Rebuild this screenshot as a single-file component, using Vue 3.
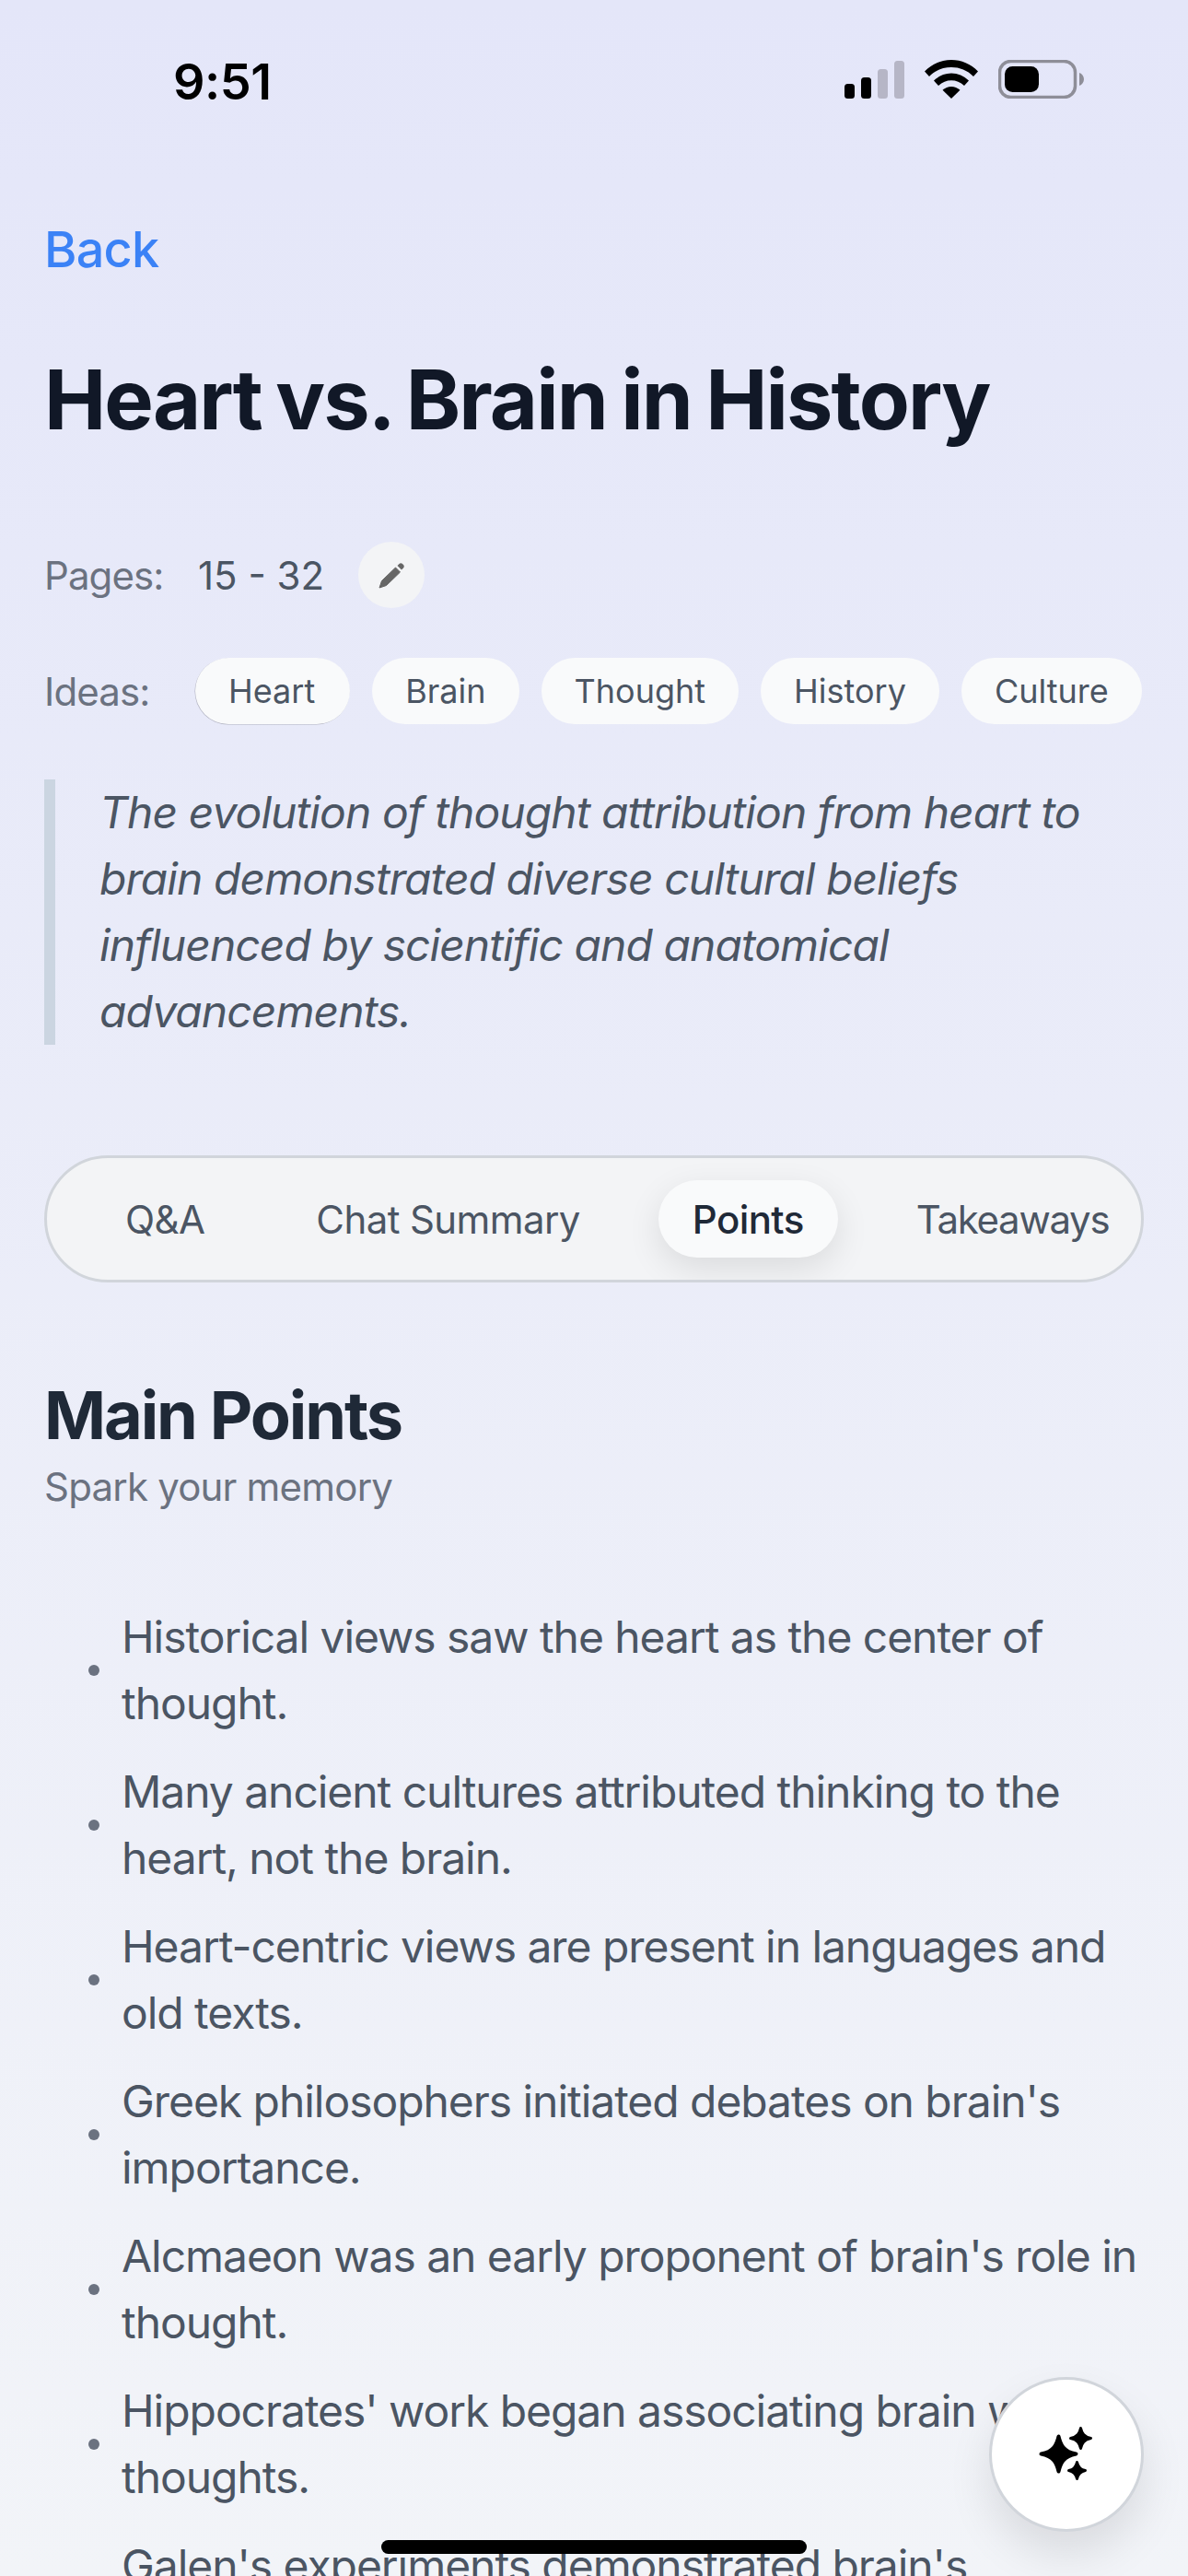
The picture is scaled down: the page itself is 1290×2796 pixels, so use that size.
<script setup>
import { ref } from 'vue'

const ideas = ['Heart', 'Brain', 'Thought', 'History', 'Culture']
const tabs = ['Q&A', 'Chat Summary', 'Points', 'Takeaways']
const activeTab = ref('Points')

const points = [
  'Historical views saw the heart as the center of thought.',
  'Many ancient cultures attributed thinking to the heart, not the brain.',
  'Heart-centric views are present in languages and old texts.',
  "Greek philosophers initiated debates on brain's importance.",
  "Alcmaeon was an early proponent of brain's role in thought.",
  "Hippocrates' work began associating brain with thoughts.",
  "Galen's experiments demonstrated brain's importance."
]
</script>

<template>
  <div class="screen">
    <header class="status-bar">
      <span class="time">9:51</span>
      <div class="status-icons">
        <svg class="signal" width="65" height="41" viewBox="0 0 65 41">
          <rect x="0" y="25" width="11" height="16" rx="3.5" fill="#000" />
          <rect x="18" y="18" width="11" height="23" rx="3.5" fill="#000" />
          <rect x="36" y="9" width="11" height="32" rx="3.5" fill="#b6b6c6" />
          <rect x="54" y="0" width="11" height="41" rx="3.5" fill="#b6b6c6" />
        </svg>
        <svg class="wifi" width="58" height="42" viewBox="0 0 58 42">
          <path d="M29 0C18 0 8 4.300 0 12.500L5 18C11.500 11.300 20 8 29 8S46.500 11.300 53 18L58 12.500C50 4.300 40 0 29 0Z" fill="#000" />
          <path d="M29 14.500C22 14.500 15.500 17.300 10 22.500L15 28C19 24.300 24 22.300 29 22.300S39 24.300 43 28L48 22.500C42.500 17.300 36 14.500 29 14.500Z" fill="#000" />
          <path d="M29 29C25.500 29 22.300 30.300 19.500 32.800L29 42L38.500 32.800C35.700 30.300 32.500 29 29 29Z" fill="#000" />
        </svg>
        <svg class="battery" width="93" height="42" viewBox="0 0 93 42">
          <rect x="1.500" y="1.500" width="82" height="39" rx="12" fill="none" stroke="#8e8e98" stroke-width="3.500" />
          <rect x="7" y="7" width="37" height="28" rx="8.500" fill="#000" />
          <path d="M88 14C91 15 93 18 93 21S91 27 88 28Z" fill="#8e8e98" />
        </svg>
      </div>
    </header>

    <main class="content">
      <a class="back">Back</a>
      <h1 class="title">Heart vs. Brain in History</h1>

      <div class="meta-row pages-row">
        <span class="meta-label">Pages:</span>
        <span class="pages-value">15 - 32</span>
        <button class="edit-btn" aria-label="Edit pages">
          <svg width="36" height="36" viewBox="0 0 36 36">
            <path fill="#666" stroke="#666" stroke-linejoin="round" d="M5 32L7.500 24.500L22.500 10L27.500 15L12.500 29.500Z" />
            <path fill="#666" d="M24.500 8L26.500 6C27.500 5 29 5 30 6L31 7C32 8 32 9.500 31 10.500L29 12.500Z" />
          </svg>
        </button>
      </div>

      <div class="meta-row ideas-row">
        <span class="meta-label ideas-label">Ideas:</span>
        <div class="chips">
          <span v-for="idea in ideas" :key="idea" class="chip">{{ idea }}</span>
        </div>
      </div>

      <blockquote class="summary">
        The evolution of thought attribution from heart to brain demonstrated diverse cultural beliefs influenced by scientific and anatomical advancements.
      </blockquote>

      <nav class="tabs">
        <button
          v-for="tab in tabs"
          :key="tab"
          class="tab"
          :class="{ active: tab === activeTab }"
          @click="activeTab = tab"
        >
          {{ tab }}
        </button>
      </nav>

      <section class="points">
        <h2 class="points-title">Main Points</h2>
        <p class="points-sub">Spark your memory</p>
        <ul class="point-list">
          <li v-for="point in points" :key="point" class="point">
            <span class="dot"></span>
            <span class="point-text">{{ point }}</span>
          </li>
        </ul>
      </section>
    </main>

    <button class="fab" aria-label="Ask AI">
      <svg width="72" height="72" viewBox="0 0 72 72">
        <path fill="#000" stroke="#000" stroke-width="4" stroke-linejoin="round" d="M27.500 16.500C29.500 25 32.500 33 46.500 35.500C32.500 38 29.500 46 27.500 54.500C25.500 46 22.500 38 8.500 35.500C22.500 33 25.500 25 27.500 16.500Z" />
        <path fill="#000" stroke="#000" stroke-width="3" stroke-linejoin="round" d="M51.500 7.500C52.800 13 55 17 62.500 18.500C55 20 52.800 24 51.500 29.500C50.200 24 48 20 40.500 18.500C48 17 50.200 13 51.500 7.500Z" />
        <path fill="#000" stroke="#000" stroke-width="3" stroke-linejoin="round" d="M47.500 44.500C48.500 49 50.500 52.500 56.500 53.500C50.500 54.500 48.500 58 47.500 62.500C46.500 58 44.500 54.500 38.500 53.500C44.500 52.500 46.500 49 47.500 44.500Z" />
      </svg>
    </button>

    <div class="home-indicator"></div>
  </div>
</template>

<style>
html,
body {
  margin: 0;
  padding: 0;
}
</style>

<style scoped>
.screen {
  position: relative;
  width: 1290px;
  height: 2796px;
  overflow: hidden;
  background: linear-gradient(180deg, #e4e6f9 0%, #f2f4f8 100%);
  font-family: Inter, 'Liberation Sans', sans-serif;
  color: #4b5563;
}

.status-bar {
  display: flex;
  justify-content: space-between;
  align-items: flex-end;
  height: 107px;
  padding: 0 113px 0 188px;
  box-sizing: border-box;
}

.time {
  margin-bottom: -9px;
  font-size: 54px;
  font-weight: 600;
  line-height: 1;
  letter-spacing: -0.5px;
  color: #000;
}

.status-icons {
  display: flex;
  align-items: flex-end;
  gap: 22px;
}

.content {
  padding: 0 48px;
}

.back {
  display: block;
  margin-top: 124px;
  font-size: 54px;
  font-weight: 500;
  line-height: 80px;
  letter-spacing: -0.8px;
  color: #3b82f6;
}

.title {
  margin: 69px 0 0;
  font-size: 90px;
  font-weight: 700;
  line-height: 108px;
  letter-spacing: -1.9px;
  word-spacing: -4px;
  color: #111827;
}

.meta-row {
  display: flex;
  align-items: center;
}

.pages-row {
  margin-top: 100px;
}

.ideas-row {
  margin-top: 54px;
}

.meta-label {
  font-size: 42px;
  letter-spacing: -0.9px;
  color: #6b7280;
  width: 167px;
}

.ideas-label {
  width: 164px;
}

.pages-value {
  font-size: 42px;
  color: #4b5563;
  width: 174px;
}

.edit-btn {
  display: flex;
  align-items: center;
  justify-content: center;
  width: 72px;
  height: 72px;
  padding: 0;
  border: none;
  border-radius: 50%;
  background: #f3f4f6;
}

.chips {
  display: flex;
  gap: 24px;
}

.chip {
  padding: 0 36px;
  font-size: 36px;
  line-height: 72px;
  border-radius: 36px;
  background: #f9fafb;
  white-space: nowrap;
}

.chip:first-child {
  padding-right: 38px;
  box-shadow: -0.5px 0.5px 0 rgba(90, 90, 105, 0.4);
}

.summary {
  margin: 60px 0 0;
  padding-left: 48px;
  border-left: 12px solid #cbd5e1;
  font-size: 48px;
  font-style: italic;
  line-height: 72px;
  letter-spacing: -0.95px;
  color: #4b5563;
}

.tabs {
  display: flex;
  gap: 49px;
  align-items: center;
  height: 138px;
  margin-top: 120px;
  padding: 0 0 0 49px;
  box-sizing: border-box;
  border: 3px solid #d1d5db;
  border-radius: 69px;
  background: #f3f4f6;
  overflow: hidden;
}

.tab {
  flex: none;
  padding: 0 36px;
  height: 84px;
  border: none;
  border-radius: 42px;
  background: transparent;
  font-family: inherit;
  font-size: 42px;
  letter-spacing: -0.6px;
  color: #4b5563;
  white-space: nowrap;
}

.tab:last-child {
  letter-spacing: -1.3px;
}

.tab.active {
  padding: 0 37px;
  background: #f9fafb;
  color: #1f2937;
  font-weight: 500;
  box-shadow: 0 12px 36px rgba(0, 0, 0, 0.1);
}

.points {
  margin-top: 96px;
}

.points-title {
  margin: 0;
  font-size: 72px;
  font-weight: 700;
  line-height: 96px;
  letter-spacing: -2.1px;
  color: #1f2937;
}

.points-sub {
  margin: 0;
  font-size: 42px;
  line-height: 60px;
  letter-spacing: -0.8px;
  color: #6b7280;
}

.point-list {
  margin: 97px 0 0;
  padding: 0;
  list-style: none;
  display: flex;
  flex-direction: column;
  gap: 24px;
}

.point {
  display: flex;
  align-items: center;
  gap: 24px;
  padding-left: 48px;
}

.dot {
  flex: none;
  width: 12px;
  height: 12px;
  border-radius: 50%;
  background: #6b7280;
}

.point-text {
  font-size: 48px;
  line-height: 72px;
  letter-spacing: -1.05px;
  color: #4b5563;
}

.fab {
  position: absolute;
  left: 1074px;
  top: 2580px;
  display: flex;
  align-items: center;
  justify-content: center;
  width: 168px;
  height: 168px;
  padding: 0;
  border: 3px solid #d1d5db;
  border-radius: 50%;
  background: #fff;
  box-shadow: 0 24px 48px rgba(0, 0, 0, 0.1);
}

.home-indicator {
  position: absolute;
  left: 414px;
  top: 2757px;
  width: 462px;
  height: 15px;
  border-radius: 8px;
  background: #000;
}
</style>
